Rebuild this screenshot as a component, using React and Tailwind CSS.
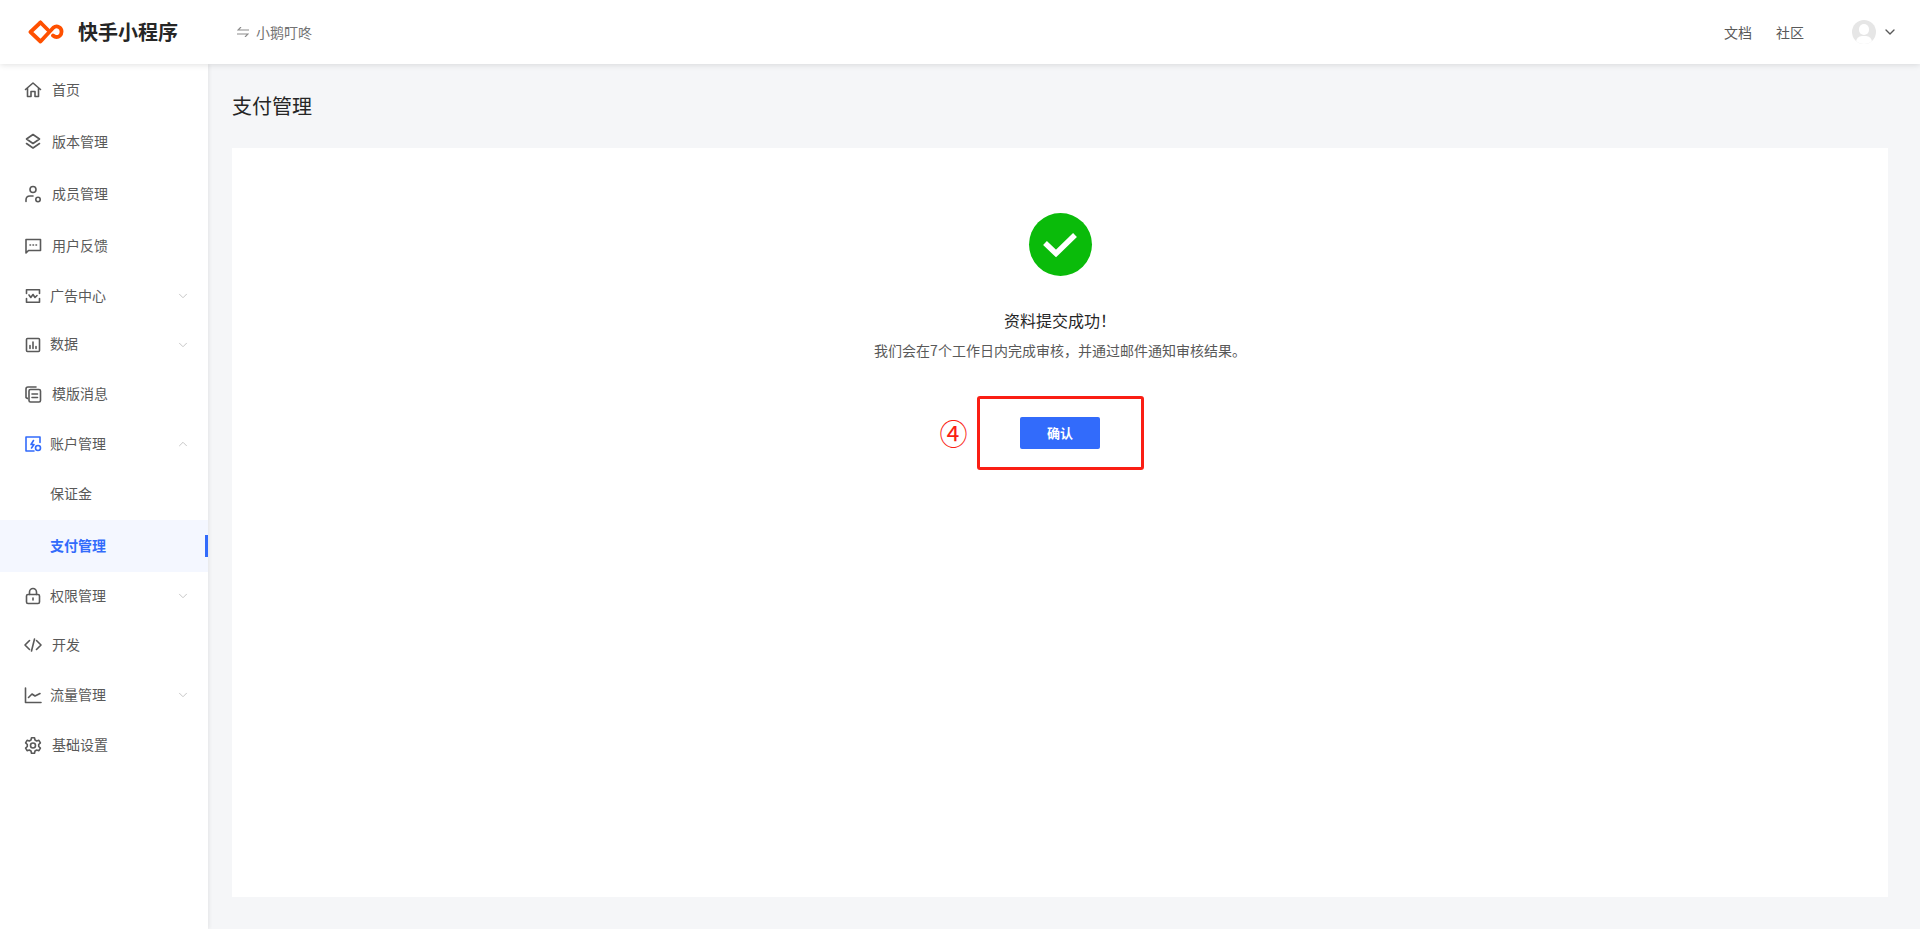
import React from 'react';
import { ChevronDown, ChevronUp } from 'lucide-react';

const Icon = ({ children, color = '#595959' }) => (
  <svg width="18" height="18" viewBox="0 0 18 18" fill="none" stroke={color} strokeWidth="1.6" strokeLinecap="round" strokeLinejoin="round" className="shrink-0">
    {children}
  </svg>
);

const icons = {
  home: <path d="M1.500 8.500 9 2l7.500 6.500M3.500 7v8.500h3.500v-5h4v5h3.500V7" />,
  layers: <><path d="M9 1.500 15.500 6 9 10.500 2.500 6Z" /><path d="M2.500 10.500 9 15l6.500-4.500" /></>,
  user: <><circle cx="9" cy="4.500" r="3" /><path d="M2 16.500v-1.500c0-2.500 1.500-4 4-4h3" /><circle cx="14" cy="14.500" r="2.200" /></>,
  chat: <><path d="M2 16V2.500h14.500v11H4.500Z" /><path d="M6 8h.5M9 8h.5M12 8h.5" /></>,
  ad: <><path d="M2.500 6.500V2.800h13v3.700M2.500 11.500v3.700h13v-3.700" /><path d="M5 8l1.800 2.500L9 7.500l2 3 2-2" /></>,
  chart: <><rect x="2.500" y="2.500" width="13" height="13" rx="1" /><path d="M6 12.500V9.500M9 12.500V6M12 12.500v-2" /></>,
  tpl: <><path d="M3.500 13.500 2 12.500V4C2 2.800 2.800 2 4 2h8" /><rect x="5" y="4.500" width="11.500" height="12.500" rx="1.500" /><path d="M8 9h5.500M8 12.500h5.500" /></>,
  account: <><path d="M16 7.500V2H2v14h8" /><path d="M9.500 5.500 7 9.500h3L7.500 13" /><circle cx="14" cy="13" r="2.500" /></>,
  lock: <><rect x="2.500" y="7.500" width="13" height="9" rx="1.500" /><path d="M5.500 7.500V5a3.500 3.500 0 0 1 7 0v2.500" /><path d="M9 11v2" /></>,
  code: <path d="M5.500 4.500 1 9l4.500 4.500M12.500 4.500 17 9l-4.500 4.500M10.500 3 7.500 15" />,
  trend: <><path d="M1.500 2v14.500h15.500" /><path d="M4.500 11.500l3.500-3.500 3 2L16 7.500" /></>,
  gear: <><path d="M7.500 1.800h3l.5 2.200 1.700 1 2.200-.7 1.500 2.600-1.700 1.600v2l1.700 1.600-1.500 2.600-2.200-.7-1.700 1-.5 2.200h-3l-.5-2.200-1.700-1-2.200.7-1.500-2.600 1.700-1.600v-2L1.600 6.900l1.500-2.600 2.200.7 1.700-1Z" /><circle cx="9" cy="9.500" r="2.500" /></>,
};

const menu = [
  { label: '首页', icon: 'home', h: 'h-[52px]' },
  { label: '版本管理', icon: 'layers', h: 'h-[52px]' },
  { label: '成员管理', icon: 'user', h: 'h-[52px]' },
  { label: '用户反馈', icon: 'chat', h: 'h-[52px]' },
  { label: '广告中心', icon: 'ad', h: 'h-[48px]', arrow: 'down' },
  { label: '数据', icon: 'chart', h: 'h-[49px]', arrow: 'down' },
  { label: '模版消息', icon: 'tpl', h: 'h-[50px]' },
  { label: '账户管理', icon: 'account', h: 'h-[50px]', arrow: 'up', color: '#326bfb' },
];

const menu2 = [
  { label: '权限管理', icon: 'lock', h: 'h-[48px]', arrow: 'down' },
  { label: '开发', icon: 'code', h: 'h-[50px]' },
  { label: '流量管理', icon: 'trend', h: 'h-[50px]', arrow: 'down' },
  { label: '基础设置', icon: 'gear', h: 'h-[50px]' },
];

const MenuRow = ({ item }) => (
  <div className={`${item.h} flex items-center pl-[24px] pr-[18px] text-[14px] text-[#595959]`}>
    <Icon color={item.color}>{icons[item.icon]}</Icon>
    <span className={item.arrow ? 'ml-[8px] mb-[2px]' : 'ml-[10px] mb-[2px]'}>{item.label}</span>
    {item.arrow === 'down' && <ChevronDown size={14} strokeWidth={1.5} className="ml-auto text-[#bfbfbf]" />}
    {item.arrow === 'up' && <ChevronUp size={14} strokeWidth={1.5} className="ml-auto text-[#bfbfbf]" />}
  </div>
);

const Logo = () => (
  <svg width="36" height="24" viewBox="0 0 36 24" fill="none" stroke="#ff5000" strokeWidth="3.800" strokeLinejoin="round" strokeLinecap="round">
    <path d="M12.500 2.500 2.500 12 12.500 21.500 25.500 7.500a5 5 0 0 1 8 4.500c0 3-2.500 5-5 5-1.500 0-2.500-.6-3.500-1.500" />
    <path d="M12.500 2.500 20 10" />
  </svg>
);

export default function App() {
  return (
    <div className="h-[929px] overflow-hidden flex flex-col bg-[#f5f6f8] font-['Noto_Sans_CJK_SC','Liberation_Sans',sans-serif]">
      <header className="relative z-10 h-[64px] shrink-0 bg-white flex items-center shadow-[0_1px_6px_rgba(0,0,0,0.12)]">
        <div className="ml-[28px] flex"><Logo /></div>
        <h1 className="ml-[14px] text-[20px] font-bold text-[#262626]">快手小程序</h1>
        <div className="ml-[59px] flex items-center gap-[7px] text-[14px] text-[#737373]">
          <svg width="12" height="10" viewBox="0 0 12 10" fill="none" stroke="#8c8c8c" strokeWidth="1.200">
            <path d="M12 3H1l3-3M0 7h11L8 10" />
          </svg>
          <span>小鹅叮咚</span>
        </div>
        <div className="ml-auto flex items-center text-[14px] text-[#595959]">
          <span>文档</span>
          <span className="ml-[24px]">社区</span>
          <div className="ml-[48px] relative w-[24px] h-[24px] rounded-full bg-[#e6e6e6] overflow-hidden">
            <div className="absolute left-[7px] top-[4px] w-[10px] h-[11px] rounded-full bg-white" />
            <div className="absolute left-[4px] top-[16px] w-[16px] h-[12px] rounded-full bg-white" />
          </div>
          <ChevronDown size={16} strokeWidth={2} className="ml-[6px] mr-[22px] text-[#595959]" />
        </div>
      </header>

      <div className="flex flex-1 min-h-0">
        <aside className="w-[208px] shrink-0 bg-white shadow-[1px_0_4px_rgba(0,0,0,0.08)]">
          {menu.map((item) => <MenuRow key={item.label} item={item} />)}
          <div className="h-[51px] flex items-center pl-[50px] pb-[2px] text-[14px] text-[#595959]">保证金</div>
          <div className="relative h-[52px] flex items-center pl-[50px] pb-[2px] text-[14px] font-bold text-[#326bfb] bg-[#f4f7ff]">
            支付管理
            <div className="absolute right-0 top-[15px] w-[3px] h-[22px] bg-[#326bfb]" />
          </div>
          {menu2.map((item) => <MenuRow key={item.label} item={item} />)}
        </aside>

        <main className="flex-1 min-w-0 pl-[24px] pr-[32px]">
          <h2 className="h-[84px] pt-[26px] text-[20px] leading-[32px] text-[#262626]">支付管理</h2>
          <section className="h-[749px] bg-white flex flex-col items-center">
            <div className="mt-[65px] w-[63px] h-[63px] rounded-full bg-[#0abb0a] flex items-center justify-center">
              <svg width="34" height="26" viewBox="0 0 34 26" fill="none" stroke="#fff" strokeWidth="5.500">
                <path d="M2 11 13 21.500 32 3" />
              </svg>
            </div>
            <p className="mt-[32px] text-[16px] leading-[24px] text-[#262626]">资料提交成功！</p>
            <p className="mt-[8px] text-[14px] leading-[20px] text-[#595959]">我们会在7个工作日内完成审核，并通过邮件通知审核结果。</p>
            <div className="relative mt-[36px] w-[167px] h-[74px] border-[3px] border-[#fa1e14] rounded-[3px] flex items-center justify-center">
              <button className="w-[80px] h-[32px] rounded-[2px] bg-[#326bfb] text-white text-[13px] font-bold">确认</button>
              <span className="absolute left-[-40px] top-[20px] text-[28px] leading-[28px] text-[#fa1e14]">④</span>
            </div>
          </section>
        </main>
      </div>
    </div>
  );
}
